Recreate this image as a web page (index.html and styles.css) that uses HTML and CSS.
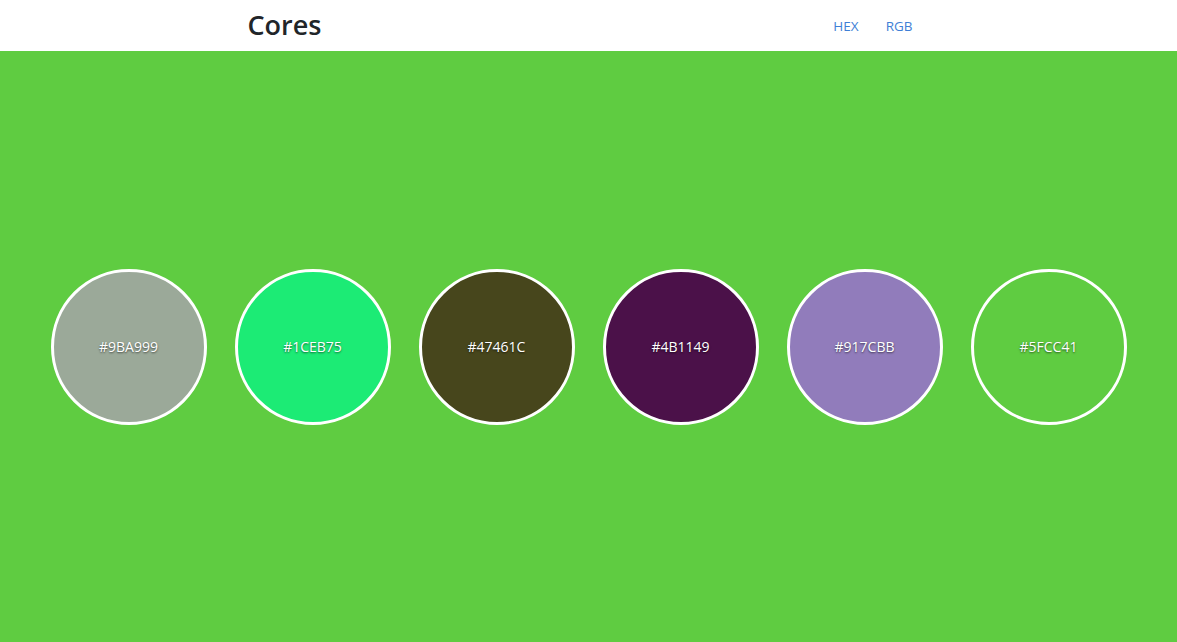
FILE: index.html
```html
<!DOCTYPE html>
<html lang="pt">
<head>
<meta charset="utf-8">
<title>Cores</title>
<link rel="stylesheet" href="styles.css">
</head>
<body>
<header class="topbar">
  <div class="bar-inner">
    <h1 class="brand">Cores</h1>
    <nav class="nav">
      <a class="nav-link" href="#">HEX</a>
      <a class="nav-link" href="#">RGB</a>
    </nav>
  </div>
</header>
<main class="stage">
  <div class="swatches">
    <div class="swatch" style="background:#9BA999"><span>#9BA999</span></div>
    <div class="swatch" style="background:#1CEB75"><span>#1CEB75</span></div>
    <div class="swatch" style="background:#47461C"><span>#47461C</span></div>
    <div class="swatch" style="background:#4B1149"><span>#4B1149</span></div>
    <div class="swatch" style="background:#917CBB"><span>#917CBB</span></div>
    <div class="swatch" style="background:#5FCC41"><span>#5FCC41</span></div>
  </div>
</main>
</body>
</html>
```

FILE: styles.css
```css
* { box-sizing: border-box; }
html, body { height: 100%; }
body {
  margin: 0;
  font-family: "Open Sans", "Noto Sans", sans-serif;
  background: #5FCC41;
  display: flex;
  flex-direction: column;
}
.topbar {
  background: #ffffff;
  height: 51px;
  flex: 0 0 auto;
}
.bar-inner {
  width: 720px;
  margin: 0 auto;
  height: 100%;
  padding: 0 19px;
  display: flex;
  align-items: center;
  justify-content: space-between;
}
.brand {
  margin: 0;
  font-size: 27px;
  font-weight: 600;
  color: #212529;
  line-height: 1;
  padding-bottom: 2px;
}
.nav {
  display: flex;
  gap: 27px;
  padding-right: 17px;
}
.nav-link {
  color: #3f7fd6;
  text-decoration: none;
  font-size: 13.5px;
}
.stage {
  flex: 1 1 auto;
  display: flex;
  align-items: center;
  justify-content: center;
}
.swatches {
  display: flex;
  gap: 28px;
}
.swatch {
  width: 156px;
  height: 156px;
  border-radius: 50%;
  border: 3px solid #ffffff;
  display: flex;
  align-items: center;
  justify-content: center;
}
.swatch span {
  color: #ffffff;
  font-size: 14px;
  text-shadow: 0 1px 2px rgba(0,0,0,0.6);
}
```
